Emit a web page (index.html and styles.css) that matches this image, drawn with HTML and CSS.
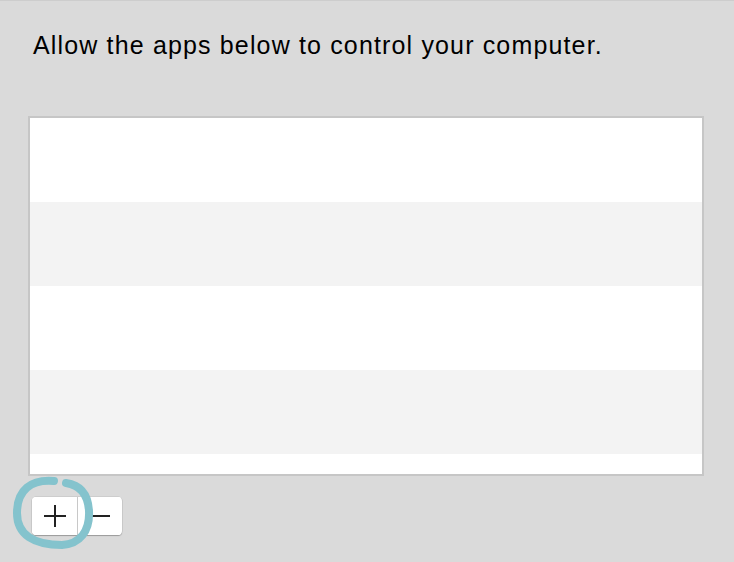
FILE: index.html
```html
<!DOCTYPE html>
<html>
<head>
<meta charset="utf-8">
<link rel="stylesheet" href="styles.css">
</head>
<body>
<div class="window">
  <p class="title">Allow the apps below to control your computer.</p>
  <div class="list">
    <div class="row"></div>
    <div class="row alt"></div>
    <div class="row"></div>
    <div class="row alt"></div>
    <div class="row"></div>
  </div>
  <div class="controls">
    <div class="segmented">
      <button class="seg plus" aria-label="Add">
        <svg width="22" height="22" viewBox="0 0 22 22"><path d="M11 0V22M0 11H22" stroke="#222" stroke-width="2"/></svg>
      </button>
      <button class="seg minus" aria-label="Remove">
        <svg width="20" height="22" viewBox="0 0 20 22"><path d="M0 11H20" stroke="#222" stroke-width="2"/></svg>
      </button>
    </div>
    <svg class="annotation" width="100" height="90" viewBox="0 0 100 90">
      <path d="M54 10 C31 8 17 19 17 42 C17 64 34 74 62 74 C80 73 90 60 89 40 C88 23 80 14 66 12" fill="none" stroke="#84c3cd" stroke-width="8" stroke-linecap="round"/>
    </svg>
  </div>
</div>
</body>
</html>
```
FILE: styles.css
```css
html, body {
  margin: 0;
  padding: 0;
}
body {
  background: #dadada;
  font-family: "Liberation Sans", Arial, sans-serif;
}
.window {
  width: 734px;
  height: 562px;
  box-sizing: border-box;
  border-top: 1px solid #cdcdcd;
  padding: 30px 30px 0 28px;
}
.title {
  margin: 0 0 57px 5px;
  font-size: 25px;
  line-height: 28px;
  letter-spacing: 1.15px;
  color: #000;
  white-space: nowrap;
}
.list {
  width: 676px;
  height: 360px;
  box-sizing: border-box;
  border: 2px solid #c6c6c6;
  background: #fff;
  display: flex;
  flex-direction: column;
  overflow: hidden;
}
.row {
  flex: 0 0 84px;
  background: #fff;
}
.row.alt {
  background: #f3f3f3;
}
.controls {
  position: relative;
  margin-top: 21px;
  margin-left: 4px;
}
.segmented {
  display: flex;
  width: 90px;
  height: 38px;
  border-radius: 4px;
  background: #fff;
  box-shadow: 0 1px 1px rgba(0,0,0,0.25), 0 0 0 0.5px rgba(0,0,0,0.12);
  overflow: hidden;
}
.seg {
  border: 0;
  padding: 0;
  margin: 0;
  background: #fff;
  display: flex;
  align-items: center;
  justify-content: center;
  height: 38px;
}
.seg.plus {
  width: 46px;
  border-right: 1px solid #c8c8c8;
}
.seg.minus {
  width: 43px;
}
.seg svg {
  display: block;
}
.annotation {
  position: absolute;
  left: -32px;
  top: -26px;
  pointer-events: none;
}
```
